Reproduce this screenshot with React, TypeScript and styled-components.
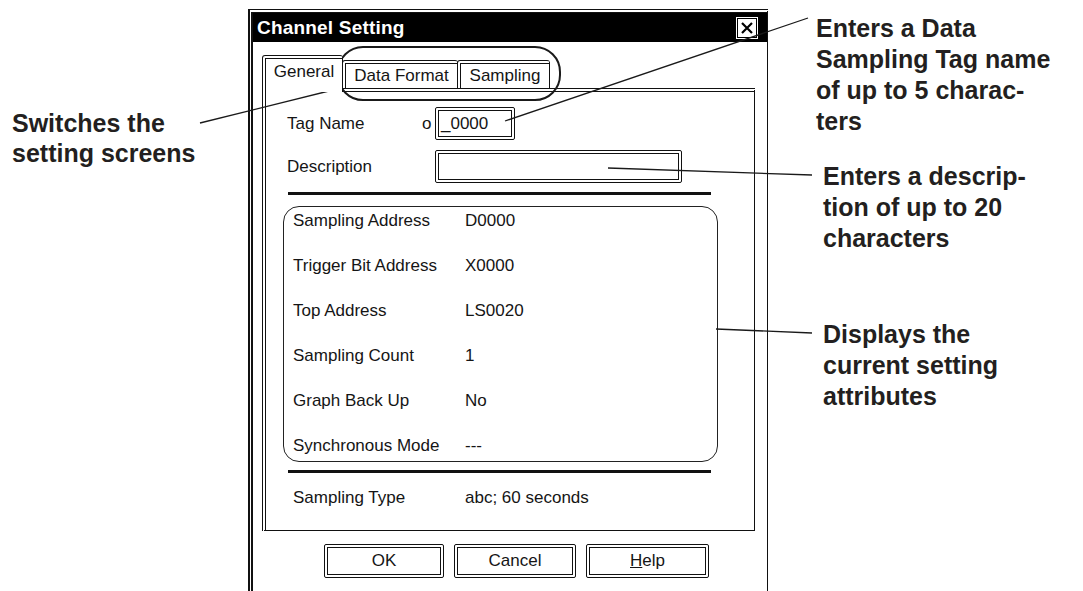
import React from 'react';
import styled, { createGlobalStyle } from 'styled-components';

const GlobalStyle = createGlobalStyle`
    html, body {
        margin: 0;
        padding: 0;
        background: #fff;
    }
    body {
        font-family: "Liberation Sans", Arial, sans-serif;
    }
`;

const Page = styled.div`
    position: relative;
    width: 1083px;
    height: 591px;
    overflow: hidden;
    display: flex;
    align-items: flex-start;
    background: #fff;
`;

const Callout = styled.div<{ $lh: number; $top: number; $indent?: number }>`
    margin-top: ${(p) => p.$top}px;
    padding-left: ${(p) => p.$indent ?? 0}px;
    font-family: "Liberation Sans", Arial, sans-serif;
    font-weight: bold;
    font-size: 25px;
    line-height: ${(p) => p.$lh}px;
    color: #231f20;
    white-space: nowrap;
`;

const LeftNotes = styled.div`
    width: 236px;
    padding-left: 12px;
    flex-shrink: 0;
`;

const RightNotes = styled.div`
    margin-left: 48px;
    display: flex;
    flex-direction: column;
`;

/* ---------- dialog window ---------- */

const Window = styled.div`
    margin-top: 9px;
    width: 520px;
    height: 600px;
    flex-shrink: 0;
    box-sizing: border-box;
    border-top: 4px double #111;
    border-left: 5px double #111;
    border-right: 1px solid #111;
    display: flex;
    flex-direction: column;
    font-family: "Liberation Sans", Arial, sans-serif;
    font-size: 17px;
    color: #151515;
`;

const TitleBar = styled.div`
    height: 29px;
    background: #000;
    display: flex;
    align-items: center;
    justify-content: space-between;
    padding: 0 9px 0 4px;
`;

const Title = styled.span`
    color: #fff;
    font-weight: bold;
    font-size: 19px;
    letter-spacing: 0.2px;
`;

const CloseBox = styled.div`
    width: 22px;
    height: 22px;
    background: #fff;
    box-shadow: inset 0 0 0 1px #fff, inset 0 0 0 2px #000;
    display: flex;
    align-items: center;
    justify-content: center;
`;

const DialogBody = styled.div`
    padding: 13px 12px 0 9px;
    display: flex;
    flex-direction: column;
`;

const TabStrip = styled.div`
    display: flex;
    align-items: flex-end;
    height: 37px;
    margin-bottom: -4px;
    position: relative;
    z-index: 1;
`;

const Tab = styled.div<{ $width: number; $active?: boolean }>`
    width: ${(p) => p.$width}px;
    height: ${(p) => (p.$active ? 37 : 28)}px;
    margin-bottom: ${(p) => (p.$active ? 0 : 4)}px;
    box-sizing: border-box;
    border-top: 4px double #111;
    border-left: 4px double #111;
    border-right: 1px solid #111;
    border-radius: 3px 3px 0 0;
    background: #fff;
    display: flex;
    align-items: center;
    justify-content: center;
    padding-bottom: ${(p) => (p.$active ? 8 : 0)}px;
    margin-left: ${(p) => (p.$active ? 0 : -1)}px;
`;

const Panel = styled.div`
    height: 443px;
    box-sizing: border-box;
    border-top: 4px double #111;
    border-left: 4px double #111;
    border-right: 1px solid #111;
    border-bottom: 1px solid #111;
    display: flex;
    flex-direction: column;
`;

const FieldRow = styled.div<{ $top: number }>`
    display: flex;
    align-items: center;
    margin-top: ${(p) => p.$top}px;
    padding-left: 21px;
`;

const FieldLabel = styled.span<{ $width: number }>`
    width: ${(p) => p.$width}px;
    flex-shrink: 0;
`;

const Marker = styled.span`
    width: 13px;
    flex-shrink: 0;
`;

const TextBox = styled.div<{ $width: number }>`
    width: ${(p) => p.$width}px;
    height: 33px;
    box-sizing: border-box;
    border: 4px double #111;
    border-radius: 2px;
    display: flex;
    align-items: center;
    padding-left: 2px;
`;

const Rule = styled.div<{ $top: number }>`
    margin: ${(p) => p.$top}px 43px 0 22px;
    height: 3px;
    background: #111;
`;

const InfoBox = styled.div`
    margin: 11px 36px 0 17px;
    height: 256px;
    box-sizing: border-box;
    border: 1.5px solid #222;
    border-radius: 16px;
    padding: 4px 0 0 9px;
    display: flex;
    flex-direction: column;
    gap: 25px;
`;

const InfoRow = styled.div`
    display: flex;
    height: 20px;
    align-items: center;
`;

const InfoLabel = styled.span`
    width: 172px;
    flex-shrink: 0;
`;

const SummaryRow = styled(InfoRow)`
    margin: 15px 0 0 27px;
`;

const ButtonRow = styled.div`
    display: flex;
    gap: 10px;
    margin: 13px 0 0 62px;
`;

const Button = styled.div<{ $width: number }>`
    width: ${(p) => p.$width}px;
    height: 34px;
    box-sizing: border-box;
    border: 4px double #111;
    border-radius: 2px;
    display: flex;
    align-items: center;
    justify-content: center;
`;

const Overlay = styled.svg`
    position: absolute;
    left: 0;
    top: 0;
    pointer-events: none;
`;

const info: [string, string][] = [
    ['Sampling Address', 'D0000'],
    ['Trigger Bit Address', 'X0000'],
    ['Top Address', 'LS0020'],
    ['Sampling Count', '1'],
    ['Graph Back Up', 'No'],
    ['Synchronous Mode', '---'],
];

export default function App() {
    return (
        <Page>
            <GlobalStyle />
            <LeftNotes>
                <Callout $lh={30} $top={108}>
                    Switches the
                    <br />
                    setting screens
                </Callout>
            </LeftNotes>

            <Window>
                <TitleBar>
                    <Title>Channel Setting</Title>
                    <CloseBox>
                        <svg width="12" height="12" viewBox="0 0 12 12">
                            <path d="M1 1 L11 11 M11 1 L1 11" stroke="#000" strokeWidth="2.2" />
                        </svg>
                    </CloseBox>
                </TitleBar>
                <DialogBody>
                    <TabStrip>
                        <Tab $width={81} $active>
                            General
                        </Tab>
                        <Tab $width={116}>Data Format</Tab>
                        <Tab $width={93}>Sampling</Tab>
                    </TabStrip>
                    <Panel>
                        <FieldRow $top={15}>
                            <FieldLabel $width={135}>Tag Name</FieldLabel>
                            <Marker>o</Marker>
                            <TextBox $width={80}>_0000</TextBox>
                        </FieldRow>
                        <FieldRow $top={10}>
                            <FieldLabel $width={148}>Description</FieldLabel>
                            <TextBox $width={247} />
                        </FieldRow>
                        <Rule $top={9} />
                        <InfoBox>
                            {info.map(([label, value]) => (
                                <InfoRow key={label}>
                                    <InfoLabel>{label}</InfoLabel>
                                    <span>{value}</span>
                                </InfoRow>
                            ))}
                        </InfoBox>
                        <Rule $top={8} />
                        <SummaryRow>
                            <InfoLabel>Sampling Type</InfoLabel>
                            <span>abc; 60 seconds</span>
                        </SummaryRow>
                    </Panel>
                    <ButtonRow>
                        <Button $width={120}>OK</Button>
                        <Button $width={122}>Cancel</Button>
                        <Button $width={123}>
                            <span>
                                <u>H</u>elp
                            </span>
                        </Button>
                    </ButtonRow>
                </DialogBody>
            </Window>

            <RightNotes>
                <Callout $lh={31} $top={13}>
                    Enters a Data
                    <br />
                    Sampling Tag name
                    <br />
                    of up to 5 charac-
                    <br />
                    ters
                </Callout>
                <Callout $lh={31} $top={24} $indent={7}>
                    Enters a descrip-
                    <br />
                    tion of up to 20
                    <br />
                    characters
                </Callout>
                <Callout $lh={31} $top={65} $indent={7}>
                    Displays the
                    <br />
                    current setting
                    <br />
                    attributes
                </Callout>
            </RightNotes>

            <Overlay width="1083" height="591" viewBox="0 0 1083 591">
                <g stroke="#1a1a1a" strokeWidth="1.3" fill="none">
                    <line x1="200" y1="123" x2="341" y2="88" />
                    <line x1="808" y1="18" x2="505" y2="121" />
                    <line x1="608" y1="168" x2="812" y2="175" />
                    <line x1="716" y1="329" x2="812" y2="333" />
                    <rect x="338" y="47" width="222" height="53" rx="25" ry="25" strokeWidth="2" />
                </g>
            </Overlay>
        </Page>
    );
}
